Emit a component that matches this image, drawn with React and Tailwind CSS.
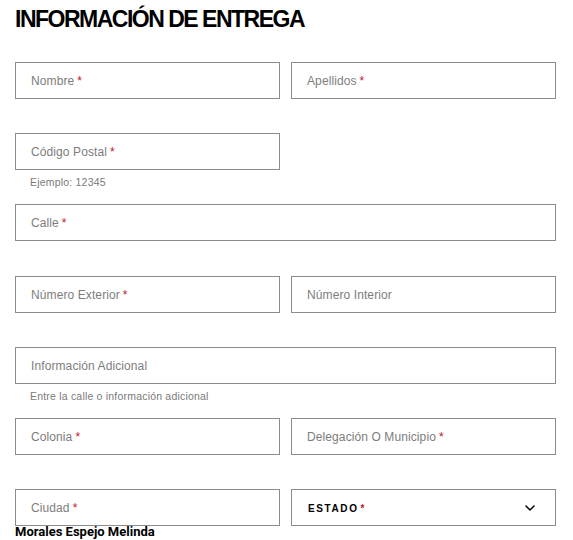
import { ChevronDown } from 'lucide-react';

const font = { fontFamily: '"Liberation Sans", Arial, sans-serif' };

function Field({ label, required, helper, className = '' }) {
    return (
        <div className={className}>
            <div className="h-[37px] border border-[#8c8c8c] bg-white flex items-center pl-[15px] text-[12px] tracking-[0.1px] text-[#7d7d7d]">
                <span>{label}</span>
                {required && <span className="text-[#c8102e] ml-[3px]">*</span>}
            </div>
            {helper && (
                <p className="mt-[6px] pl-[15px] text-[10.5px] leading-[12px] tracking-[0.2px] text-[#7a7a7a]">{helper}</p>
            )}
        </div>
    );
}

export default function App() {
    return (
        <div className="relative min-h-[540px] bg-white text-black" style={font}>
            <div className="pl-[15px] pr-[17px] pt-[8px]">
                {/* Title */}
                <h1 className="text-[23px] leading-[23px] font-bold tracking-[-1.5px] uppercase">
                    Información de Entrega
                </h1>

                <div className="mt-[31px] flex flex-col">
                    <div className="grid grid-cols-2 gap-[11px] h-[71px]">
                        <Field label="Nombre" required />
                        <Field label="Apellidos" required />
                    </div>

                    <div className="grid grid-cols-2 gap-[11px] h-[71px]">
                        <Field label="Código Postal" required helper="Ejemplo: 12345" />
                    </div>

                    <div className="h-[72px]">
                        <Field label="Calle" required />
                    </div>

                    <div className="grid grid-cols-2 gap-[11px] h-[71px]">
                        <Field label="Número Exterior" required />
                        <Field label="Número Interior" />
                    </div>

                    <div className="h-[71px]">
                        <Field label="Información Adicional" helper="Entre la calle o información adicional" />
                    </div>

                    <div className="grid grid-cols-2 gap-[11px] h-[71px]">
                        <Field label="Colonia" required />
                        <Field label="Delegación O Municipio" required />
                    </div>

                    <div className="grid grid-cols-2 gap-[11px]">
                        <Field label="Ciudad" required />
                        <div className="h-[37px] border border-[#8c8c8c] bg-white flex items-center justify-between pl-[16px] pr-[17px]">
                            <span className="text-[10px] leading-[12px] mt-[2px] font-bold tracking-[1.6px]">
                                ESTADO<span className="text-[#c8102e] ml-[2px]">*</span>
                            </span>
                            <ChevronDown size={16} strokeWidth={2.2} />
                        </div>
                    </div>
                </div>
            </div>

            {/* Overlay name */}
            <div
                className="absolute left-[15px] top-[524px] text-[13px] leading-[16px] font-bold"
                style={{ fontFamily: 'Roboto, "Liberation Sans", sans-serif' }}
            >
                Morales Espejo Melinda
            </div>
        </div>
    );
}
